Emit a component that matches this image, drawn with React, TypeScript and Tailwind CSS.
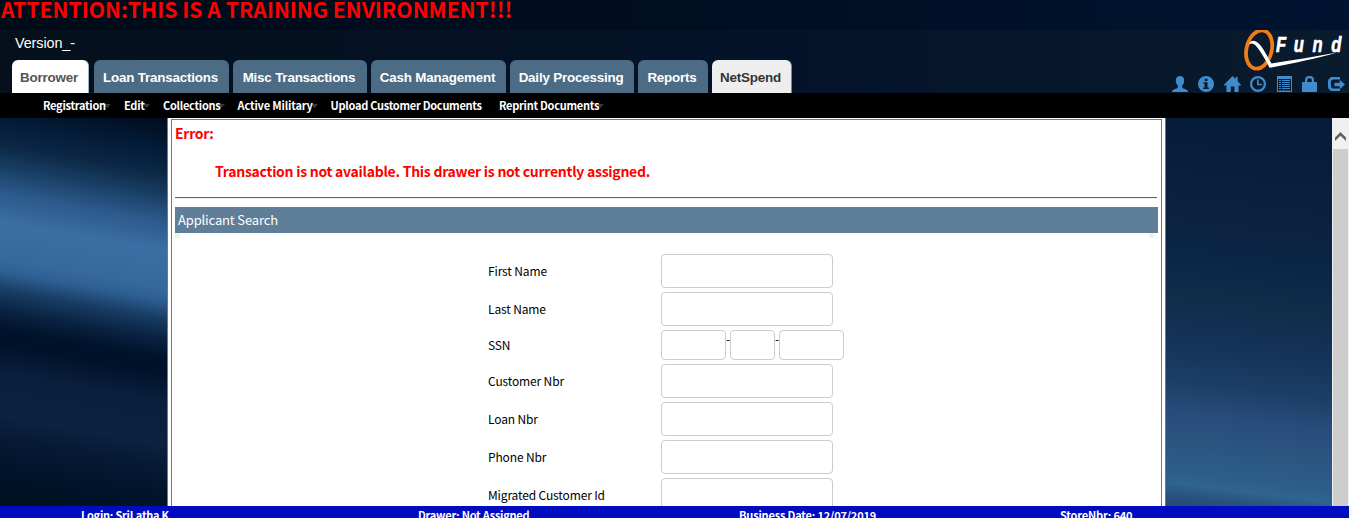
import type { ReactNode } from "react";

const tabs = [
  { label: "Borrower", cls: "w-[77px] bg-white text-[#555] mr-[5px] border-r border-[#9fb4c4]" },
  { label: "Loan Transactions", cls: "w-[135px] bg-[#4c6b85] text-white mr-1" },
  { label: "Misc Transactions", cls: "w-[134px] bg-[#4c6b85] text-white mr-1" },
  { label: "Cash Management", cls: "w-[135px] bg-[#4c6b85] text-white mr-1" },
  { label: "Daily Processing", cls: "w-[124px] bg-[#4c6b85] text-white mr-1" },
  { label: "Reports", cls: "w-[70px] bg-[#4c6b85] text-white mr-1" },
  { label: "NetSpend", cls: "w-[80px] bg-[#eee] text-[#333] border-r border-[#6d8ba3]" },
];

const menus = [
  { label: "Registration", cls: "w-[81px]", arrow: true },
  { label: "Edit", cls: "w-[39px]", arrow: true },
  { label: "Collections", cls: "w-[74.500px]", arrow: true },
  { label: "Active Military", cls: "w-[93px] tracking-[-0.15px]", arrow: true },
  { label: "Upload Customer Documents", cls: "w-[168.500px]", arrow: false },
  { label: "Reprint Documents", cls: "w-[110px]", arrow: true },
];

const footer = [
  { label: "Login: SriLatha K", cls: "w-[337px] tracking-[-0.24px]" },
  { label: "Drawer: Not Assigned", cls: "w-[321px] tracking-[-0.24px]" },
  { label: "Business Date: 12/07/2019", cls: "w-[321px]" },
  { label: "StoreNbr: 640", cls: "w-[120px]" },
];

function Glyph({ children, w = 17 }: { children: ReactNode; w?: number }) {
  return (
    <svg width={w} height="17" viewBox={`0 0 ${w} 17`} fill="#428bca" className="shrink-0">
      {children}
    </svg>
  );
}

function HeaderIcons() {
  return (
    <div className="flex h-[17px] items-start pl-[1172px]">
      <div className="w-[26px]">
        <Glyph>
          <path d="M8 0c2.600 0 4.200 1.800 4.200 4.400 0 2.200-.9 4-2 5v1.900c0 .6.4 1 1 1.200 2.600.8 4.800 1.600 4.800 3V16H0v-.5c0-1.400 2.200-2.200 4.800-3 .6-.2 1-.6 1-1.200V9.400c-1.100-1-2-2.800-2-5C3.800 1.800 5.400 0 8 0z" />
        </Glyph>
      </div>
      <div className="w-[26px]">
        <Glyph>
          <path fillRule="evenodd" d="M8 0a8 8 0 1 1 0 16A8 8 0 0 1 8 0zM6.700 2.800v2.200h2.800V2.800zM5.200 6.300v1.300h1.300v4H5.200V13h5.600v-1.400H9.500V6.300z" />
        </Glyph>
      </div>
      <div className="w-[26px]">
        <Glyph>
          <path d="M8.500 0l3 3V1h2.200v4.200L17 8.700l-.4.800h-2V16h-4.200v-5.500H6.800V16H2.500V9.500H.4L0 8.700z" />
        </Glyph>
      </div>
      <div className="w-[27px]">
        <Glyph>
          <circle cx="8" cy="8" r="6.900" fill="none" stroke="#428bca" strokeWidth="2.200" />
          <path d="M7 3.500h1.700v4.300h3.300v1.500H7z" />
        </Glyph>
      </div>
      <div className="w-[25px]">
        <Glyph>
          <path fillRule="evenodd" d="M0 0h15v16H0zM1 3v12h13V3z" />
          <path d="M2 4h2v1H2zM5 4h8v1H5zM2 6h2v1H2zM5 6h8v1H5zM2 8h2v1H2zM5 8h8v1H5zM2 10h2v1H2zM5 10h8v1H5zM2 12h2v1H2zM5 12h8v1H5zM2 14h11v.5H2z" />
        </Glyph>
      </div>
      <div className="w-[26px]">
        <Glyph>
          <path fillRule="evenodd" d="M3 6V4a4 4 0 0 1 4-4h1a4 4 0 0 1 4 4v2h2.300a.7.700 0 0 1 .7.700V15.300a.7.700 0 0 1-.7.700H.7a.7.700 0 0 1-.7-.7V6.700A.7.700 0 0 1 .7 6zM5.200 6h4.600V4a1.800 1.800 0 0 0-1.800-1.800H7A1.800 1.800 0 0 0 5.200 4z" />
        </Glyph>
      </div>
      <Glyph>
        <path d="M5 1h7v2.600H5.500c-1.600 0-2.600 1-2.600 2.600v3.600c0 1.600 1 2.600 2.600 2.600H12V15H5c-3 0-5-2-5-5V6c0-3 2-5 5-5z" />
        <path d="M11.700 3.700L17 8.500l-5.300 4.800v-3H6.500V6.700h5.200z" />
      </Glyph>
    </div>
  );
}

function Logo() {
  return (
    <svg width="106" height="44" viewBox="0 0 106 44" className="shrink-0">
      <g transform="rotate(14 17 20)">
        <ellipse cx="17" cy="19.500" rx="12.600" ry="19.500" fill="none" stroke="#f07c14" strokeWidth="3.800" />
      </g>
      <path d="M7 14.500C8.300 9.700 13 9.300 18 14.700c4 4.700 8 13 11.500 18.800C49 30.500 73 26.500 95 22.500c-20 6.200-43 10.500-67.500 15.300C24.500 31.500 21 25.500 17.500 20.500 13.500 14.500 10.500 12 7 14.500z" fill="#fff" />
      <text
        x="45.300 69 94 119"
        y="22"
        fill="#fff"
        stroke="#fff"
        strokeWidth="0.700"
        fontSize="22"
        fontStyle="italic"
        fontWeight="700"
        fontFamily="Liberation Sans, sans-serif"
        transform="scale(.75 1)"
      >
        Fund
      </text>
    </svg>
  );
}

function Field({ label, children, h = "h-[34px]" }: { label: string; children?: ReactNode; h?: string }) {
  return (
    <div className={`flex shrink-0 items-center ${h}`}>
      <label className="w-[173px] text-[12px] leading-none tracking-[-0.14px] text-black">{label}</label>
      {children ?? <input className="h-[34px] w-[172px] rounded border border-[#ccc] bg-white" />}
    </div>
  );
}

export default function App() {
  return (
    <div className="flex h-[518px] w-[1349px] flex-col overflow-hidden bg-[#000f24] font-['Noto_Sans_CJK_SC',sans-serif]">
      <div className="h-[30px] shrink-0 bg-[linear-gradient(90deg,#000b18,#000e22_50%,#001431)]">
        <h1 className="-mt-[6px] pl-px text-[21.200px] leading-[30px] font-bold tracking-[0.02px] text-[#f00]">
          ATTENTION:THIS IS A TRAINING ENVIRONMENT!!!
        </h1>
      </div>
      <header className="relative flex h-[63px] shrink-0 flex-col justify-between bg-[linear-gradient(90deg,#05101c,#04132a_60%,#091b2d)]">
        <div className="pt-[5px] pl-[15px] font-['Liberation_Sans',sans-serif] text-[14.400px] leading-4 tracking-[-0.1px] text-white">Version_-</div>
        <nav className="flex h-[33px] pl-3">
          {tabs.map((t) => (
            <a key={t.label} className={`flex h-[33px] shrink-0 items-center justify-center rounded-t-[6px] pt-[4px] pr-[2px] font-['Liberation_Sans',sans-serif] text-[13.400px] font-bold tracking-[-0.2px] ${t.cls}`}>
              {t.label}
            </a>
          ))}
        </nav>
        <div className="absolute top-0 left-[1242px]">
          <Logo />
        </div>
        <div className="absolute top-[46px] left-0">
          <HeaderIcons />
        </div>
      </header>
      <nav className="flex h-[25px] shrink-0 items-center bg-black pl-[43px] text-[11px] font-bold tracking-[-0.27px] text-white">
        {menus.map((m) => (
          <div key={m.label} className={`flex shrink-0 items-center whitespace-nowrap ${m.cls}`}>
            <span className="relative z-10">{m.label}</span>
            {m.arrow && (
              <svg width="7" height="4" className="-ml-[2px]">
                <path d="M0 0h7L3.500 4z" fill="#3a3a3a" />
              </svg>
            )}
          </div>
        ))}
      </nav>
      <div className="flex h-[388px] shrink-0">
        <div className="w-[167px] shrink-0 bg-[linear-gradient(190deg,#000c1c_0px,#031a35_28px,#0b2745_55px,#183d62_76px,#2c5a8c_103px,#3b6fa3_132px,#36699a_168px,#2e5f93_180px,#183d63_198px,#0a2444_217px,#00132c_236px,#001129_250px,#0a1f3d_280px,#0d2240_320px,#061a35_345px,#00132a_375px,#001020_411px)]" />
        <main className="flex w-[999px] shrink-0 border-x border-[#5f7e98] bg-white px-[3px] pt-px">
          <section className="flex h-[387px] grow flex-col overflow-hidden border border-b-0 border-[#5f7e98] pl-[3px]">
            <div className="h-[77px] w-[982px] shrink-0 text-[14px] font-bold tracking-[-0.27px] text-[#f00]">
              <p className="pt-[3px] leading-5">Error:</p>
              <p className="pt-[18px] pl-10 leading-5">Transaction is not available. This drawer is not currently assigned.</p>
            </div>
            <div className="h-[2px] w-[982px] shrink-0 border-t border-b border-t-[#666] border-b-[#eee]" />
            <div className="mt-2 flex h-[26px] w-[983px] shrink-0 items-center bg-[#5f7e98] pl-[3px] text-[13px] tracking-[-0.15px] text-white">
              Applicant Search
            </div>
            <div className="flex h-[5px] w-[979px] shrink-0 justify-between">
              <i className="size-[5px] bg-[#eff3e5]" />
              <i className="size-[5px] bg-[#f1f3e8]" />
            </div>
            <form className="mt-4 flex flex-col gap-1 pl-[313px]">
              <Field label="First Name" />
              <Field label="Last Name" />
              <Field label="SSN" h="h-[30px]">
                <div className="flex h-[30px] text-[12px] leading-[18px] text-black">
                  <input className="h-[30px] w-[65px] rounded border border-[#ccc]" />
                  <span className="w-1">-</span>
                  <input className="h-[30px] w-[45px] rounded border border-[#ccc]" />
                  <span className="w-1">-</span>
                  <input className="h-[30px] w-[65px] rounded border border-[#ccc]" />
                </div>
              </Field>
              <Field label="Customer Nbr" />
              <Field label="Loan Nbr" />
              <Field label="Phone Nbr" />
              <Field label="Migrated Customer Id" />
            </form>
          </section>
        </main>
        <div className="w-[166px] shrink-0 bg-[linear-gradient(187deg,#051b37_0px,#071e3b_50px,#0c2240_120px,#0a2645_150px,#112d4a_200px,#15335a_240px,#1c3e66_280px,#284c7b_310px,#2b5581_340px,#2c5c88_365px,#2f6390_382px,#28507c_395px,#284a70_408px)]" />
        <div className="flex w-[17px] shrink-0 flex-col items-center bg-[#f0f0f0]">
          <svg width="17" height="31" viewBox="0 0 17 31" className="shrink-0">
            <path d="M3 19.500L8.500 14l5.500 5.500v3.500L8.500 17.800 3 23z" fill="#606060" />
          </svg>
          <div className="w-[15px] grow bg-[#cdcdcd]" />
        </div>
      </div>
      <footer className="flex h-3 shrink-0 overflow-hidden bg-[#000cc0] pl-[81px] text-[11px] leading-[18px] font-bold tracking-[-0.18px] text-white">
        {footer.map((f) => (
          <span key={f.label} className={`shrink-0 whitespace-nowrap ${f.cls}`}>
            {f.label}
          </span>
        ))}
      </footer>
    </div>
  );
}
